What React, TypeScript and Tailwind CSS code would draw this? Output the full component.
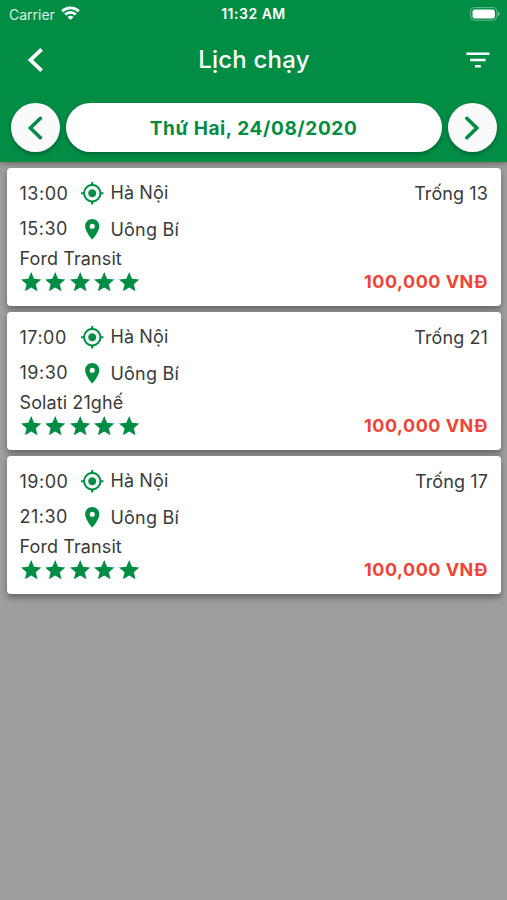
import { MdMyLocation, MdPlace, MdStar } from 'react-icons/md';

interface Trip {
  id: number;
  departure: string;
  arrival: string;
  from: string;
  to: string;
  vehicle: string;
  seats: number;
  price: string;
}

const trips: Trip[] = [
  { id: 1, departure: '13:00', arrival: '15:30', from: 'Hà Nội', to: 'Uông Bí', vehicle: 'Ford Transit', seats: 13, price: '100,000 VNĐ' },
  { id: 2, departure: '17:00', arrival: '19:30', from: 'Hà Nội', to: 'Uông Bí', vehicle: 'Solati 21ghế', seats: 21, price: '100,000 VNĐ' },
  { id: 3, departure: '19:00', arrival: '21:30', from: 'Hà Nội', to: 'Uông Bí', vehicle: 'Ford Transit', seats: 17, price: '100,000 VNĐ' },
];

function StatusBar() {
  return (
    <div className="grid h-7 grid-cols-3 items-center pl-[7px] pr-[7px] text-[14px]">
      <div className="flex items-center gap-[6px] pl-[2px]">
        <span className="text-white/85">Carrier</span>
        <svg className="mb-[2px]" width="19" height="14" viewBox="0 0 19 14" fill="none" stroke="white" strokeWidth="2.8">
          <path d="M1.2 5.2a12 12 0 0 1 16.6 0" />
          <path d="M4.2 8.6a7.6 7.6 0 0 1 10.6 0" />
          <path d="M9.5 14 6.5 10.9a4.2 4.2 0 0 1 6 0z" fill="white" stroke="none" />
        </svg>
      </div>
      <span className="whitespace-nowrap pb-px text-center font-semibold tracking-[0.5px]">11:32 AM</span>
      <svg className="mb-px justify-self-end" width="30" height="14" viewBox="0 0 30 14">
        <rect x="0.6" y="0.6" width="26.3" height="12.6" rx="4" fill="none" stroke="white" strokeOpacity="0.4" />
        <rect x="2.5" y="2.4" width="22.4" height="9.1" rx="2.3" fill="white" />
        <path d="M28 4.6c2 .8 2 3.8 0 4.6z" fill="white" fillOpacity="0.5" />
      </svg>
    </div>
  );
}

function RoundButton({ direction }: { direction: 'prev' | 'next' }) {
  return (
    <button className="flex size-[49px] shrink-0 items-center justify-center rounded-full bg-[#fafafa] text-[#028d45] shadow-[0_2px_4px_rgba(0,0,0,0.3)]">
      <svg width="24" height="26" viewBox="0 0 24 26" fill="none" stroke="currentColor" strokeWidth="3.6" strokeLinecap="round">
        <path d={direction === 'prev' ? 'M17.4 3.3 7.4 13l10 9.7' : 'M6.8 3.3 16.8 13l-10 9.7'} />
      </svg>
    </button>
  );
}

function TripCard({ trip }: { trip: Trip }) {
  return (
    <article className="flex h-[138px] justify-between rounded-[4px] bg-white pl-[12.5px] pr-[13px] text-[18px] text-[#3a3a3a] shadow-[0_4px_6px_rgba(0,0,0,0.35)]">
      <div className="pt-3">
        <div className="flex h-[25px] items-center">
          <span className="w-[61px] pt-[2px] tracking-[0.5px]">{trip.departure}</span>
          <MdMyLocation className="-ml-[0.5px] size-[24.5px] text-[#028d45]" />
          <span className="ml-[6px] tracking-[0.1px]">{trip.from}</span>
        </div>
        <div className="mt-[11px] flex h-[25px] items-center">
          <span className="w-[61px] tracking-[0.5px]">{trip.arrival}</span>
          <MdPlace className="-ml-[0.5px] size-[24.5px] text-[#028d45]" />
          <span className="ml-[6px] pt-[2px] tracking-[0.2px]">{trip.to}</span>
        </div>
        <p className="mt-[6px] h-[23px] leading-[23px] tracking-[0.1px]">{trip.vehicle}</p>
        <div className="-ml-[0.5px] flex text-[#028d45]">
          {[1, 2, 3, 4, 5].map((n) => (
            <MdStar key={n} className="size-[24.4px]" />
          ))}
        </div>
      </div>
      <div className="flex flex-col items-end justify-between pb-[12px] pt-[13px]">
        <span className="leading-[25px] tracking-[0.1px]">Trống {trip.seats}</span>
        <span className="font-bold leading-[25px] tracking-[0.5px] text-[#f04438]">{trip.price}</span>
      </div>
    </article>
  );
}

export default function App() {
  return (
    <div className="h-[900px] w-[507px] overflow-hidden bg-[#9e9e9e] font-['Inter',sans-serif]">
      <header className="h-[162px] bg-[#028d45] text-white shadow-[0_2px_5px_rgba(0,0,0,0.3)]">
        <StatusBar />
        <div className="grid h-[64px] grid-cols-[40px_1fr_40px] items-center pl-[24px] pr-[17px]">
          <svg width="24" height="26" viewBox="0 0 24 26" fill="none" stroke="currentColor" strokeWidth="3.8">
            <path d="M17.6 2.4 6.5 13l11.1 10.6" />
          </svg>
          <h1 className="pr-[6px] text-center text-[24px] font-[450] tracking-[0.2px]">Lịch chạy</h1>
          <svg className="justify-self-end" width="24" height="16" viewBox="0 0 24 16" fill="currentColor">
            <path d="M.4.5h23v2.6H.4zM4.2 6.7h15.4v2.6H4.2zM9 12.9h5.8v2.6H9z" />
          </svg>
        </div>
        <div className="flex items-center gap-[6px] px-[10.5px] pt-[11px]">
          <RoundButton direction="prev" />
          <button className="h-[49px] flex-1 rounded-full bg-white pt-[3px] text-[19px] font-bold tracking-[0.6px] text-[#028d45] shadow-[0_2px_4px_rgba(0,0,0,0.3)]">
            Thứ Hai, 24/08/2020
          </button>
          <RoundButton direction="next" />
        </div>
      </header>
      <main className="flex flex-col gap-[6px] pl-[7px] pr-[6px] pt-[6.4px]">
        {trips.map((trip) => (
          <TripCard key={trip.id} trip={trip} />
        ))}
      </main>
    </div>
  );
}
